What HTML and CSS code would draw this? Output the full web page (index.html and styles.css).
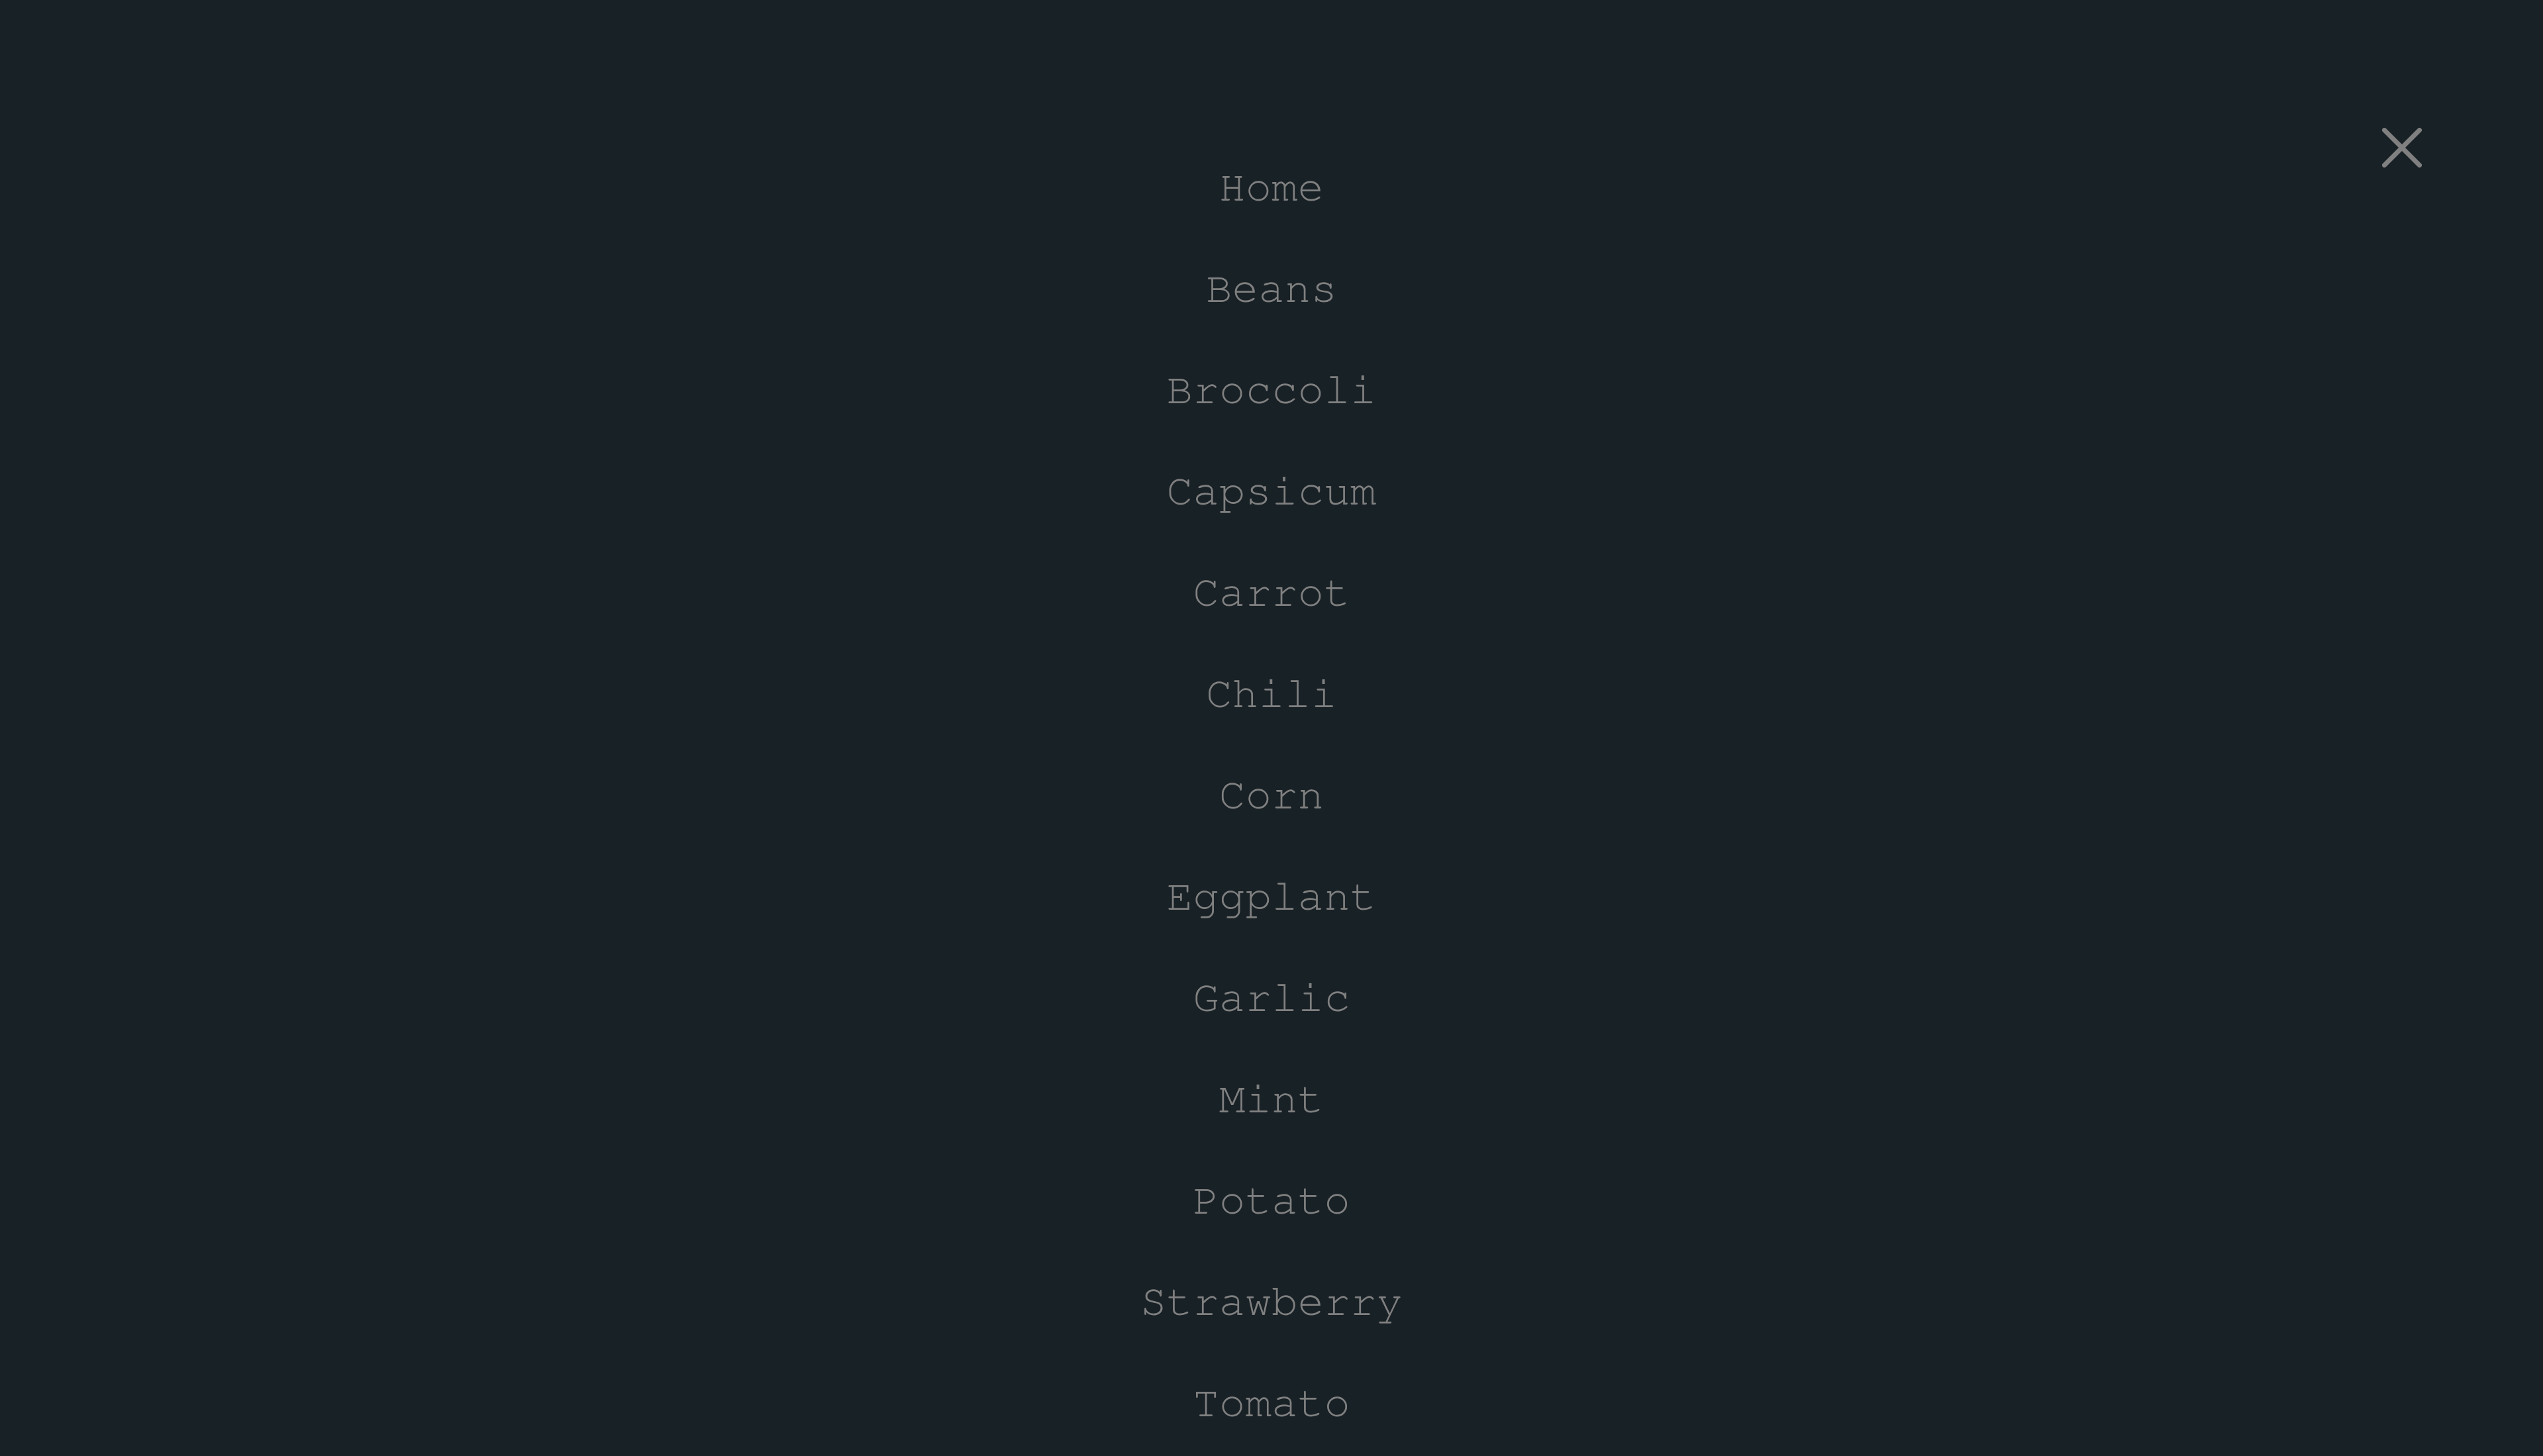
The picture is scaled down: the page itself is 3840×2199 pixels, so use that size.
FILE: index.html
```html
<!DOCTYPE html>
<html lang="en">
<head>
<meta charset="utf-8">
<title>Menu</title>
<link rel="stylesheet" href="styles.css">
</head>
<body>
<div class="overlay">
  <button class="close" aria-label="Close menu">
    <svg width="60" height="60" viewBox="0 0 60 60" aria-hidden="true">
      <path d="M3.5 3.5 L56.5 56.5 M56.5 3.5 L3.5 56.5" stroke="#808080" stroke-width="7" stroke-linecap="round" fill="none"/>
    </svg>
  </button>
  <nav class="menu">
    <ul class="menu-list">
      <li><a href="#">Home</a></li>
      <li><a href="#">Beans</a></li>
      <li><a href="#">Broccoli</a></li>
      <li><a href="#">Capsicum</a></li>
      <li><a href="#">Carrot</a></li>
      <li><a href="#">Chili</a></li>
      <li><a href="#">Corn</a></li>
      <li><a href="#">Eggplant</a></li>
      <li><a href="#">Garlic</a></li>
      <li><a href="#">Mint</a></li>
      <li><a href="#">Potato</a></li>
      <li><a href="#">Strawberry</a></li>
      <li><a href="#">Tomato</a></li>
    </ul>
  </nav>
</div>
</body>
</html>
```
FILE: styles.css
```css
html, body {
  margin: 0;
  padding: 0;
  height: 100%;
}
body {
  background: #182126;
  font-family: "FreeMono", "Liberation Mono", monospace;
  overflow: hidden;
}
.overlay {
  position: relative;
  min-height: 100%;
}
.close {
  position: absolute;
  top: 193px;
  right: 183px;
  width: 60px;
  height: 60px;
  padding: 0;
  border: 0;
  background: none;
  cursor: pointer;
}
.close svg {
  display: block;
}
.menu {
  padding-top: 207px;
}
.menu-list {
  list-style: none;
  margin: 0;
  padding: 0;
  display: flex;
  flex-direction: column;
  align-items: center;
}
.menu-list li {
  line-height: 153px;
  font-size: 66px;
}
.menu-list a {
  color: #808080;
  text-decoration: none;
}
```
